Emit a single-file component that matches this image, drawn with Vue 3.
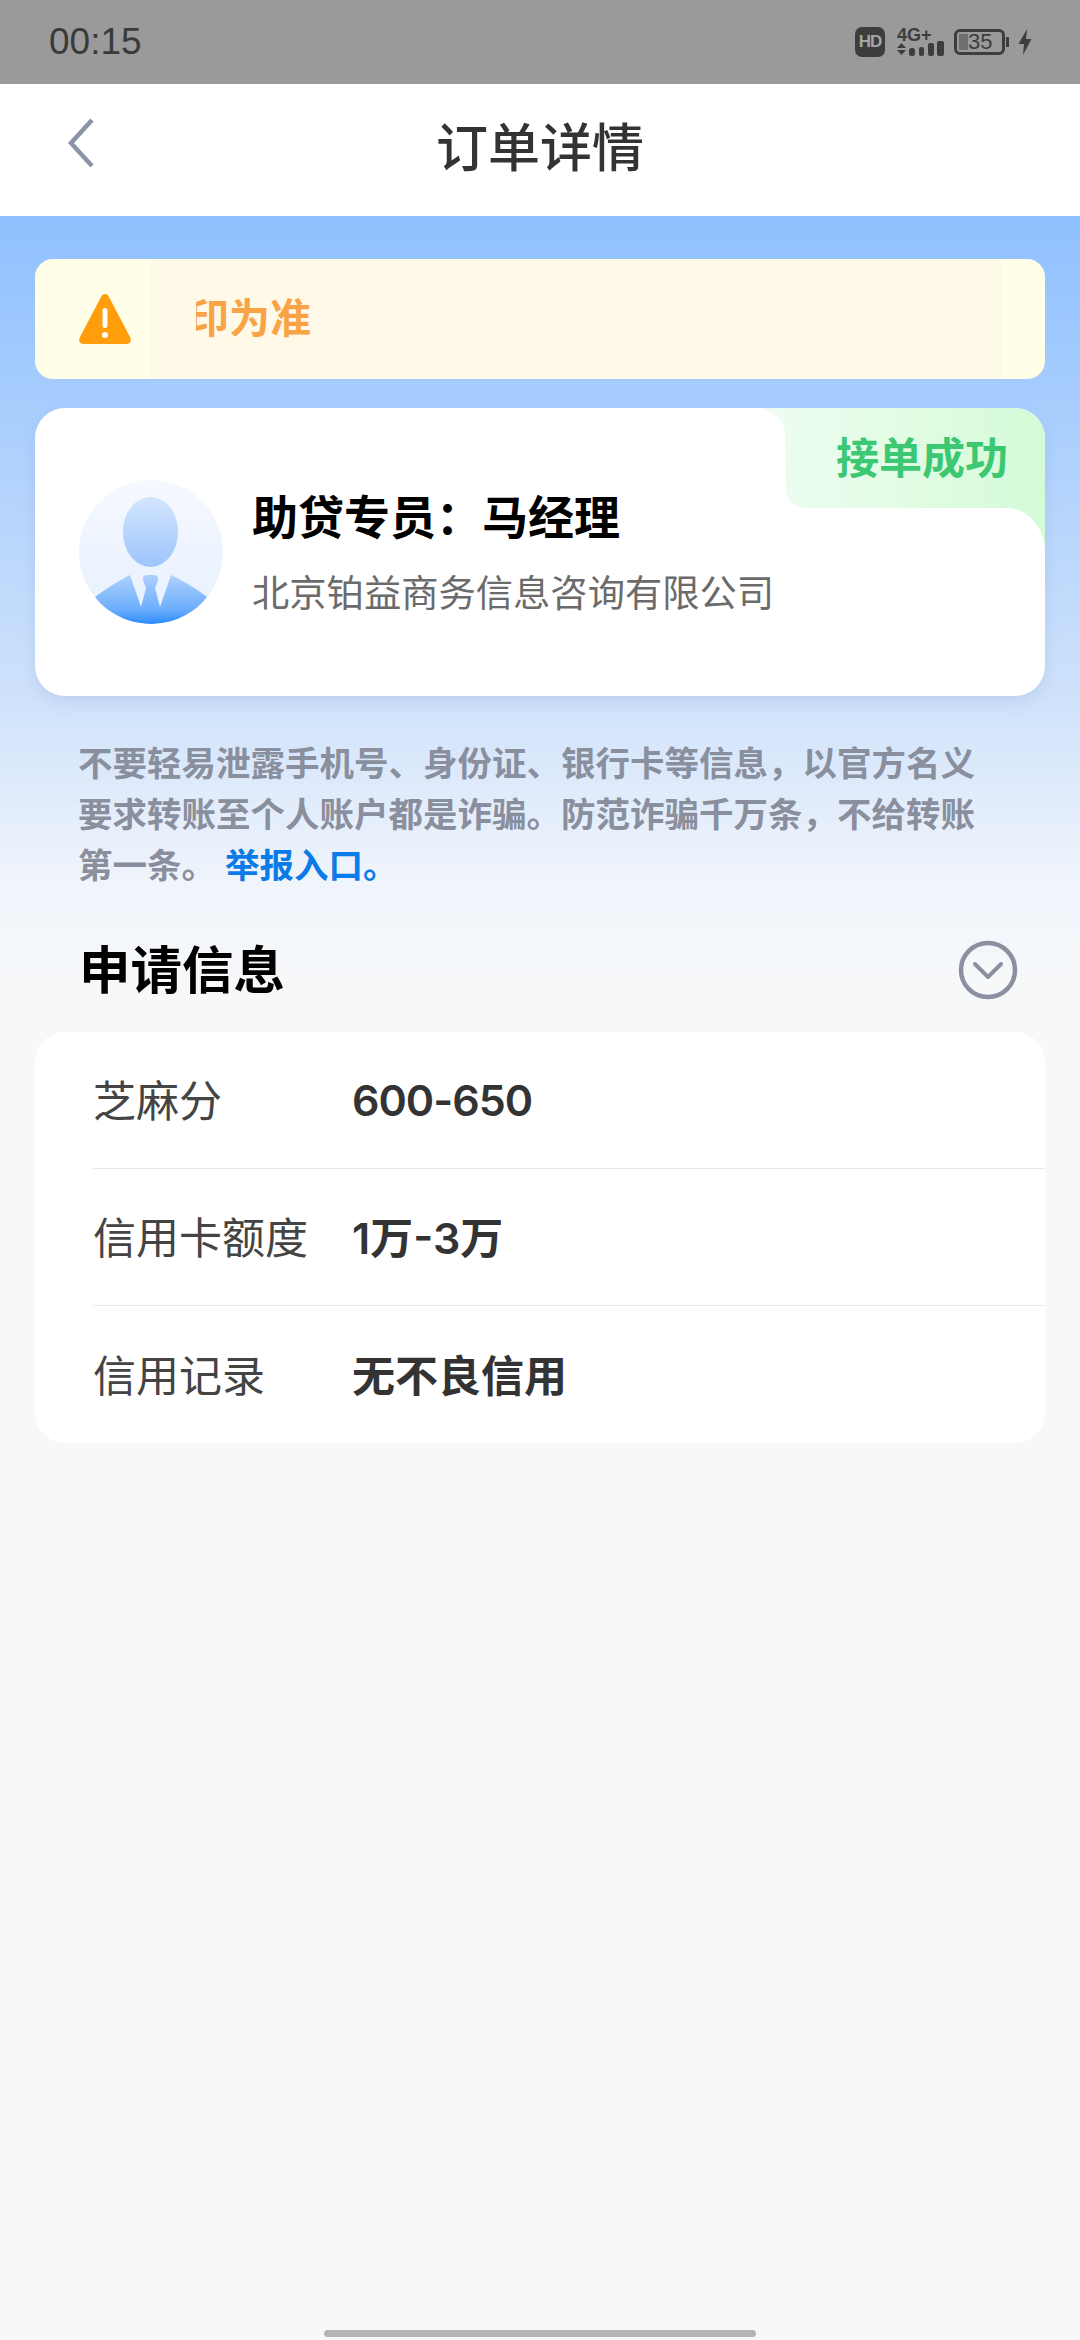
<template>
    <div class="page">
        <div class="status-bar">
            <span class="time">00:15</span>
            <div class="status-icons">
                <span class="hd">HD</span>
                <svg class="signal" width="48" height="34" viewBox="0 -4 48 34">
                    <text x="0" y="14" class="net-text">4G+</text>
                    <path d="M4.5 16 L9 21 L0 21 Z M0 23 L9 23 L4.5 28 Z" fill="#3d3d3d" />
                    <rect x="12" y="21" width="6" height="8" rx="2.5" fill="#3d3d3d" />
                    <rect x="22" y="20" width="5" height="9" rx="2" fill="#3d3d3d" />
                    <rect x="31" y="16" width="6" height="13" rx="2" fill="#3d3d3d" />
                    <rect x="40" y="14" width="7" height="15" rx="2" fill="#3d3d3d" />
                </svg>
                <div class="battery">
                    <div class="battery-level"></div>
                    <span class="battery-num">35</span>
                </div>
                <svg class="bolt" width="14" height="26" viewBox="0 0 14 26">
                    <path d="M9 0 L0.5 15 L6 15 L5 26 L13.5 10 L8 10 Z" fill="#3d3d3d" />
                </svg>
            </div>
        </div>

        <div class="nav-bar">
            <svg class="back" width="28" height="50" viewBox="0 0 28 50" fill="none">
                <path d="M25 2 L4 25 L25 48" stroke="#8a94a6" stroke-width="4.5" />
            </svg>
            <span class="nav-title">订单详情</span>
        </div>

        <div class="content">
            <div class="notice">
                <svg class="notice-icon" width="52" height="50" viewBox="0 0 52 50">
                    <path d="M26 0 C28 0 29 1 30 3 L51 43 C53 47 51 50 47 50 L5 50 C1 50 -1 47 1 43 L22 3 C23 1 24 0 26 0 Z" fill="#ff9d0a" />
                    <rect x="23.5" y="14" width="5" height="20" rx="2.5" fill="#fff" />
                    <circle cx="26" cy="41" r="3" fill="#fff" />
                </svg>
                <div class="marquee">
                    <div class="marquee-clip"><span>印为准</span></div>
                </div>
            </div>

            <div class="agent-card">
                <svg class="badge-bg" width="300" height="150" viewBox="0 0 300 150">
                    <defs>
                        <linearGradient id="badgeGrad" x1="0" y1="0" x2="1" y2="0">
                            <stop offset="0" stop-color="#effdf2" />
                            <stop offset="1" stop-color="#d4fbd7" />
                        </linearGradient>
                    </defs>
                    <path d="M8 0 C28 0 40 12 40 28 L41 82 C41 92 50 100 60 100 L262 100 C284 100 298 120 300 139 L300 30 A30 30 0 0 0 270 0 Z" fill="url(#badgeGrad)" />
                </svg>
                <span class="badge-text">接单成功</span>
                <svg class="avatar" width="144" height="144" viewBox="0 0 144 144">
                    <defs>
                        <linearGradient id="avatarBg" x1="0" y1="0" x2="0" y2="1">
                            <stop offset="0" stop-color="#f6f9ff" />
                            <stop offset="1" stop-color="#e6f0fe" />
                        </linearGradient>
                        <linearGradient id="faceGrad" x1="0" y1="0" x2="0" y2="1">
                            <stop offset="0" stop-color="#d3e5ff" />
                            <stop offset="1" stop-color="#9cc5fc" />
                        </linearGradient>
                        <linearGradient id="suitGrad" gradientUnits="userSpaceOnUse" x1="0" y1="94" x2="0" y2="144">
                            <stop offset="0" stop-color="#b0d2fd" />
                            <stop offset="0.7" stop-color="#6caefc" />
                            <stop offset="1" stop-color="#2c8cff" />
                        </linearGradient>
                        <clipPath id="avatarClip"><circle cx="72" cy="72" r="72" /></clipPath>
                    </defs>
                    <circle cx="72" cy="72" r="72" fill="url(#avatarBg)" />
                    <ellipse cx="71.5" cy="52" rx="27.5" ry="35" fill="url(#faceGrad)" />
                    <g clip-path="url(#avatarClip)">
                        <path d="M16 117 C26 109 38 102 51 95 L62 127 L66 118 L77 118 L81 127 L92 95 C104 101 118 109 128 117 C116 134 96 144 72 144 C48 144 28 134 16 117 Z" fill="url(#suitGrad)" />
                        <path d="M64 98 C64 95 67 95 71.5 95 C76 95 79 95 79 98 C79 102 77 105 76 108 L81 127 L71.5 136 L62 127 L67 108 C66 105 64 102 64 98 Z" fill="url(#suitGrad)" />
                    </g>
                </svg>
                <div class="agent-info">
                    <div class="agent-name">助贷专员：马经理</div>
                    <div class="agent-company">北京铂益商务信息咨询有限公司</div>
                </div>
            </div>

            <p class="warning">
                不要轻易泄露手机号、身份证、银行卡等信息，以官方名义要求转账至个人账户都是诈骗。防范诈骗千万条，不给转账第一条。<span class="report">举报入口。</span>
            </p>

            <div class="section-head">
                <h2>申请信息</h2>
                <svg class="toggle" width="60" height="60" viewBox="0 0 60 60" fill="none">
                    <circle cx="30" cy="30" r="27" stroke="#8b90a0" stroke-width="4.5" />
                    <path d="M17 24 L30 37 L43 24" stroke="#8b90a0" stroke-width="4" stroke-linecap="round" stroke-linejoin="round" />
                </svg>
            </div>

            <div class="info-card">
                <div v-for="row in rows" :key="row.label" class="info-row">
                    <span class="info-label">{{ row.label }}</span>
                    <span class="info-value">{{ row.value }}</span>
                </div>
            </div>
        </div>

        <div class="home-bar"></div>
    </div>
</template>

<script setup>
const rows = [
    { label: '芝麻分', value: '600-650' },
    { label: '信用卡额度', value: '1万-3万' },
    { label: '信用记录', value: '无不良信用' }
]
</script>

<style>
html, body {
    margin: 0;
    background: #f6f8fa;
}
</style>

<style scoped>
.page {
    position: relative;
    width: 1080px;
    height: 2340px;
    overflow: hidden;
    background: #f6f8fa;
    font-family: "Liberation Sans", "Noto Sans CJK SC", sans-serif;
}

.status-bar {
    height: 84px;
    background: #9a9a9a;
    display: flex;
    align-items: center;
    justify-content: space-between;
    padding: 0 48px 0 49px;
    box-sizing: border-box;
}

.time {
    font-size: 37px;
    color: #3a3a3a;
}

.status-icons {
    display: flex;
    align-items: center;
}

.hd {
    width: 30px;
    height: 30px;
    background: #3d3d3d;
    border-radius: 7px;
    color: #a5a5a5;
    font-size: 17px;
    letter-spacing: -1px;
    font-weight: 700;
    line-height: 30px;
    text-align: center;
    margin-right: 12px;
}

.signal {
    margin-bottom: 4px;
}

.net-text {
    font-family: "Liberation Sans", sans-serif;
    font-size: 18px;
    font-weight: 700;
    fill: #3d3d3d;
}

.battery {
    position: relative;
    width: 51px;
    height: 26px;
    margin-left: 9px;
    border: 3px solid #3d3d3d;
    border-radius: 6px;
    box-sizing: border-box;
}

.battery::after {
    content: "";
    position: absolute;
    right: -7px;
    top: 5px;
    width: 3px;
    height: 10px;
    background: #3d3d3d;
}

.battery-level {
    position: absolute;
    left: 2px;
    top: 2px;
    bottom: 2px;
    width: 9px;
    background: #6f6f6f;
}

.battery-num {
    position: absolute;
    left: 11px;
    top: 0;
    font-size: 22px;
    line-height: 20px;
    color: #3d3d3d;
}

.bolt {
    margin-left: 13px;
}

.nav-bar {
    position: relative;
    height: 132px;
    padding-bottom: 12px;
    box-sizing: border-box;
    background: #fff;
    display: flex;
    align-items: center;
    justify-content: center;
}

.back {
    position: absolute;
    left: 67px;
    top: 34px;
}

.nav-title {
    font-size: 52px;
    font-weight: 500;
    color: #333;
}

.content {
    padding: 43px 35px 0;
    background: linear-gradient(180deg, #8fc0ff 0, #cfe2fb 484px, #f0f4fb 664px, #f6f8fa 760px);
}

.notice {
    height: 120px;
    background: #fffee9;
    border-radius: 18px;
    display: flex;
    align-items: center;
    padding-left: 44px;
    box-sizing: border-box;
}

.notice-icon {
    flex: none;
}

.marquee {
    width: 852px;
    height: 120px;
    margin-left: 19px;
    padding-left: 46px;
    box-sizing: border-box;
    background: #fffae8;
    display: flex;
    align-items: center;
}

.marquee-clip {
    overflow: hidden;
    width: 700px;
    margin-bottom: 8px;
    white-space: nowrap;
    font-size: 41px;
    font-weight: 700;
    color: #f9a347;
}

.marquee-clip span {
    display: block;
    margin-left: -8px;
}

.agent-card {
    position: relative;
    height: 288px;
    margin-top: 29px;
    background: #fff;
    border-radius: 30px;
    box-shadow: 0 6px 14px rgba(110, 140, 190, 0.18);
    display: flex;
    align-items: center;
    padding-left: 44px;
    box-sizing: border-box;
}

.badge-bg {
    position: absolute;
    right: 0;
    top: 0;
}

.badge-text {
    position: absolute;
    right: 37px;
    top: 29px;
    font-size: 43px;
    line-height: 44px;
    font-weight: 700;
    color: #3cc873;
}

.avatar {
    flex: none;
}

.agent-info {
    margin-left: 29px;
    padding-top: 3px;
}

.agent-name {
    font-size: 46px;
    line-height: 60px;
    font-weight: 700;
    color: #000;
}

.agent-company {
    margin-top: 21px;
    font-size: 37.3px;
    line-height: 50px;
    color: #6b6b6b;
}

.warning {
    margin: 43px 0 0;
    padding: 0 43px;
    font-size: 34.5px;
    line-height: 51px;
    font-weight: 700;
    color: #8a8f9e;
}

.report {
    margin-left: 9px;
    color: #0b7be8;
}

.section-head {
    display: flex;
    align-items: center;
    justify-content: space-between;
    margin-top: 43px;
    padding: 0 27px 0 44px;
    height: 62px;
}

.section-head h2 {
    margin: 0;
    font-size: 51.5px;
    font-weight: 700;
    color: #000;
}

.toggle {
    margin-top: 8px;
}

.info-card {
    margin-top: 35px;
    background: #fff;
    border-radius: 30px;
    overflow: hidden;
}

.info-row {
    height: 137px;
    margin-left: 58px;
    padding-bottom: 4px;
    display: flex;
    align-items: center;
    box-sizing: border-box;
    border-bottom: 1.5px solid #e6e8ec;
}

.info-row:last-child {
    border-bottom: none;
}

.info-label {
    width: 259px;
    font-size: 43px;
    color: #444;
}

.info-value {
    font-family: Inter, "Noto Sans CJK SC", sans-serif;
    font-size: 43px;
    font-weight: 600;
    color: #333;
}

.info-row:first-child .info-value {
    letter-spacing: -1px;
    padding-top: 3px;
}

.home-bar {
    position: absolute;
    left: 324px;
    bottom: 3px;
    width: 432px;
    height: 7px;
    border-radius: 3.5px;
    background: #b5b5b7;
}
</style>
